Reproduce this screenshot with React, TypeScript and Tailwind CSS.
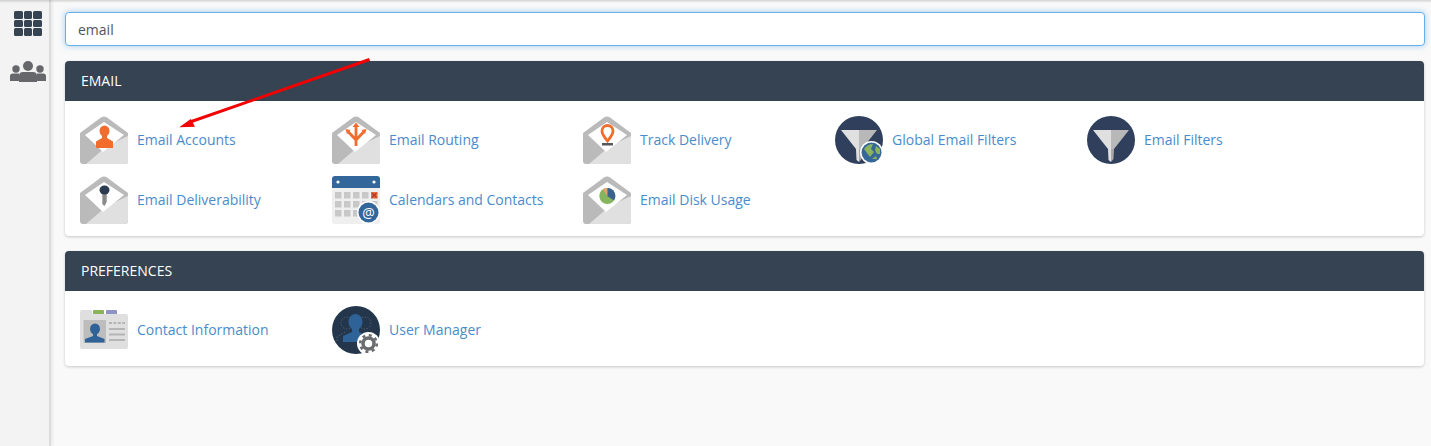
import type { ReactNode } from "react";

function Envelope({ children }: { children: ReactNode }) {
  return (
    <svg viewBox="0 0 48 48" className="w-12 h-12 shrink-0">
      <path d="M21 1.5 Q24 -0.5 27 1.5 L48 17 V45 Q48 48 45 48 H3 Q0 48 0 45 V17 Z" fill="#bababa" />
      <path d="M48 20 V45 Q48 48 45 48 H6 L27 30 Z" fill="#e0e0e0" />
      <path d="M5 19 L24 6 L44 19 L23 36 Z" fill="#fff" />
      {children}
    </svg>
  );
}

function Funnel({ globe }: { globe?: boolean }) {
  return (
    <svg viewBox="0 0 48 48" className="w-12 h-12 shrink-0">
      <circle cx="24" cy="24" r="24" fill="#2f3f5c" />
      <path d="M6 14 H24 V33 H21 Z" fill="#e0e0e0" />
      <path d="M42 14 H24 V33 H27 Z" fill="#b8b8b8" />
      <path d="M21 33 H24 V46 L21.5 44 Z" fill="#e0e0e0" />
      <path d="M24 33 H27 L26.5 43 L24 46 Z" fill="#a8a8a8" />
      {globe && (
        <>
          <circle cx="36.5" cy="36.5" r="11.5" fill="#fff" />
          <circle cx="36.5" cy="36.5" r="10" fill="#356799" />
          <path d="M29 33 Q33 28 38 28 L36 33 L39 36 L35 41 L32 37 Z" fill="#8ab35b" />
          <path d="M41 30 L45 33 L45 38 L42 38 L40 34 Z" fill="#8ab35b" />
          <path d="M37 43 L41 40 L42 43 Z" fill="#8ab35b" />
        </>
      )}
    </svg>
  );
}

const icons: Record<string, ReactNode> = {
  accounts: (
    <Envelope>
      <ellipse cx="24.5" cy="15" rx="5" ry="5.6" fill="#f26c2d" />
      <path d="M22 19 H27 V22 L33 25.5 V32 H16 V25.5 L22 22 Z" fill="#f26c2d" />
    </Envelope>
  ),
  routing: (
    <Envelope>
      <path d="M24 9 V30 M24 24 L15.5 15 M24 24 L32.5 15" stroke="#f26c2d" strokeWidth="2.8" fill="none" />
      <path d="M24 6.5 L27.5 11 H20.5 Z M13.5 13 L18.5 14 L15 18 Z M34.5 13 L29.5 14 L33 18 Z" fill="#f26c2d" />
    </Envelope>
  ),
  track: (
    <Envelope>
      <path d="M24.5 25 C21 20.5 19 18.5 19 15 A5.5 5.5 0 0 1 30 15 C30 18.5 28 20.5 24.5 25 Z" fill="#fff" stroke="#f26c2d" strokeWidth="2.8" />
      <path d="M19 27 H30 V29.5 H19 Z" fill="#55585c" />
    </Envelope>
  ),
  deliverability: (
    <Envelope>
      <path d="M22.3 15 H26.7 V26 L24.5 30 L22.3 28 Z" fill="#8a8a8a" />
      <ellipse cx="24.5" cy="14" rx="5" ry="4.6" fill="#2b3c50" />
    </Envelope>
  ),
  usage: (
    <Envelope>
      <circle cx="24.3" cy="20" r="8" fill="#86b45f" />
      <path d="M24.3 20 L24.3 12 A8 8 0 0 1 31 24.4 Z" fill="#3a6390" />
      <path d="M24.3 20 L19.8 13.4 A8 8 0 0 1 24.3 12 Z" fill="#e8a06a" />
    </Envelope>
  ),
  calendar: (
    <svg viewBox="0 0 48 48" className="w-12 h-12 shrink-0">
      <path d="M0 12 H48 V46 Q48 48 46 48 H2 Q0 48 0 46 Z" fill="#efefef" />
      <path d="M3 0 H45 Q48 0 48 3 V12 H0 V3 Q0 0 3 0 Z" fill="#33669a" />
      <circle cx="6" cy="6" r="1.6" fill="#fff" />
      <circle cx="42" cy="6" r="1.6" fill="#fff" />
      {[3, 12, 21, 30, 39].flatMap((x) =>
        [16, 25, 34].map((y) => <rect key={`${x}-${y}`} x={x} y={y} width="6.5" height="6.5" fill="#c8c8c8" />),
      )}
      <rect x="39" y="16" width="6.5" height="6.5" fill="#e8703a" />
      <path d="M40 17 L44.5 21.5 M44.5 17 L40 21.5" stroke="#a33" strokeWidth="1.2" />
      <circle cx="36.5" cy="36.5" r="11.5" fill="#fff" />
      <circle cx="36.5" cy="36.5" r="10" fill="#33669a" />
      <text x="36.5" y="41.5" textAnchor="middle" fontSize="14" fill="#fff" fontFamily="'Open Sans', sans-serif">@</text>
    </svg>
  ),
  contact: (
    <svg viewBox="0 0 48 48" className="w-12 h-12 shrink-0">
      <rect x="13" y="4" width="11" height="5" rx="1" fill="#8ab35b" />
      <rect x="26" y="4" width="11" height="5" rx="1" fill="#8f93c4" />
      <path d="M2 4 H11 Q12 4 12 5 V8 H46 Q48 8 48 10 V41 Q48 43 46 43 H2 Q0 43 0 41 V6 Q0 4 2 4 Z" fill="#dfdfdf" />
      <rect x="3.5" y="14" width="22.5" height="23" fill="#bdbdbd" />
      <ellipse cx="15" cy="23" rx="5" ry="5.5" fill="#2f6296" />
      <path d="M13 27 H17 V30 L24.5 33 V36.5 H5 V33 L13 30 Z" fill="#2f6296" />
      <path d="M29 17 H45" stroke="#b5b5b5" strokeWidth="2" strokeDasharray="3 1.4" />
      <path d="M29 23 H45 M29 28.5 H45 M29 34 H45" stroke="#b5b5b5" strokeWidth="2" />
    </svg>
  ),
  user: (
    <svg viewBox="0 0 48 48" className="w-12 h-12 shrink-0">
      <circle cx="24" cy="24" r="24" fill="#24364b" />
      <g fill="none" stroke="#4b6078" strokeWidth="1" strokeDasharray="1.5 1.5">
        <circle cx="15" cy="17" r="6" />
        <circle cx="33" cy="17" r="6" />
        <path d="M5 35 V31 L13 26 M43 35 V31 L35 26" />
      </g>
      <ellipse cx="23.5" cy="16" rx="7" ry="8" fill="#2f6296" />
      <path d="M20 22 H27 V26 L36 30 V36 H11 V30 L20 26 Z" fill="#2f6296" />
      <circle cx="36.5" cy="37.5" r="11.5" fill="#fff" />
      <circle cx="36.5" cy="37.5" r="5.5" fill="none" stroke="#6a6c70" strokeWidth="3.5" />
      <circle cx="36.5" cy="37.5" r="8.3" fill="none" stroke="#6a6c70" strokeWidth="2.6" strokeDasharray="3 3.52" />
    </svg>
  ),
};

type Item = { label: string; icon: ReactNode };

const emailItems: Item[] = [
  { label: "Email Accounts", icon: icons.accounts },
  { label: "Email Routing", icon: icons.routing },
  { label: "Track Delivery", icon: icons.track },
  { label: "Global Email Filters", icon: <Funnel globe /> },
  { label: "Email Filters", icon: <Funnel /> },
  { label: "Email Deliverability", icon: icons.deliverability },
  { label: "Calendars and Contacts", icon: icons.calendar },
  { label: "Email Disk Usage", icon: icons.usage },
];

const prefItems: Item[] = [
  { label: "Contact Information", icon: icons.contact },
  { label: "User Manager", icon: icons.user },
];

function Panel({ title, items }: { title: string; items: Item[] }) {
  return (
    <section className="w-[1359px] rounded-[4px] bg-white shadow-[0_1px_3px_rgba(0,0,0,0.2)] overflow-hidden">
      <h2 className="h-10 bg-[#364352] pl-4 text-sm leading-10 font-normal text-white">{title}</h2>
      <div className="grid grid-cols-[252px_251px_252px_252px_252px] gap-y-3 px-[15px] pt-[15px] pb-3">
        {items.map(({ label, icon }) => (
          <a key={label} className="flex h-12 items-center gap-[9px] text-sm text-[#4a8ccb]">
            {icon}
            <span>{label}</span>
          </a>
        ))}
      </div>
    </section>
  );
}

export default function App() {
  return (
    <div className="relative flex h-[446px] w-[1431px] overflow-hidden bg-[#f9f9f9] font-['Open_Sans',sans-serif]">
      <aside className="flex w-[51px] shrink-0 flex-col items-center border-r-2 border-[#dcdcdc] bg-[#f3f3f3] pt-[11px] pl-[7px] shadow-[2px_0_3px_rgba(0,0,0,0.06)]">
        <div className="grid grid-cols-3 gap-[1px]">
          {Array.from({ length: 9 }).map((_, i) => (
            <span key={i} className="h-[7.5px] w-[8.7px] rounded-[1.5px] bg-[#364352]" />
          ))}
        </div>
        <svg viewBox="0 0 36 22" className="mt-[25px] h-[22px] w-9" fill="#66676b">
          <circle cx="6" cy="8" r="3.7" />
          <circle cx="30" cy="8" r="3.7" />
          <circle cx="18" cy="5" r="5" />
          <path d="M0 20 V15 Q0 12.5 3 12.5 H9 V20 Z M27 12.5 H33 Q36 12.5 36 15 V20 H27 Z" />
          <path d="M9 21 V15 Q9 11 13 11 H23 Q27 11 27 15 V21 Z" />
        </svg>
      </aside>

      <main className="flex-1 pt-3 pl-[14px]">
        <input
          readOnly
          value="email"
          className="h-[34px] w-[1360px] rounded-[4px] border border-[#66afe9] bg-white px-3 text-sm text-[#555] shadow-[0_0_6px_rgba(102,175,233,0.6)] outline-none"
        />
        <div className="mt-[15px] flex flex-col gap-[15px]">
          <Panel title="EMAIL" items={emailItems} />
          <Panel title="PREFERENCES" items={prefItems} />
        </div>
      </main>

      <div className="absolute inset-x-0 top-0 h-[3px] bg-gradient-to-b from-black/15 to-transparent" />

      <svg viewBox="0 0 1431 446" className="pointer-events-none absolute inset-0 h-[446px] w-[1431px]">
        <path d="M369.5 59.5 L190 122" stroke="#f30000" strokeWidth="3" />
        <path d="M179.3 127.3 L190.7 119 L195 126.7 Z" fill="#f30000" />
      </svg>
    </div>
  );
}
